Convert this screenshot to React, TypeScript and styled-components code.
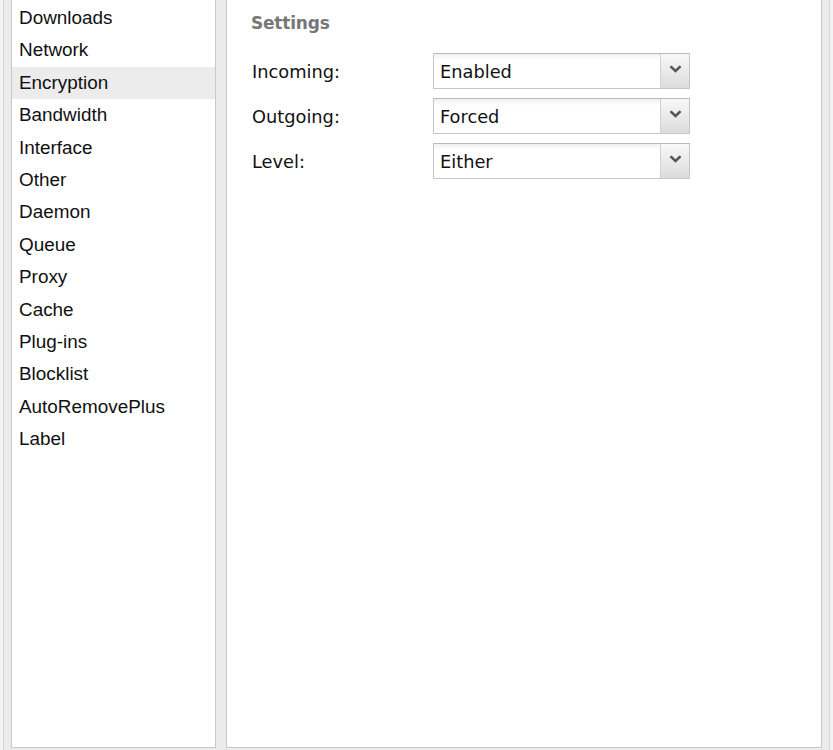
import React from "react";
import styled, { createGlobalStyle } from "styled-components";

const Global = createGlobalStyle`
  html, body { margin: 0; padding: 0; background: #ececec; }
  #root { width: 833px; height: 750px; }
`;

const Frame = styled.div`
  width: 833px;
  height: 750px;
  box-sizing: border-box;
  background: #f3f3f3;
  padding-left: 3px;
  padding-right: 3px;
  display: flex;
`;

const Inner = styled.div`
  flex: 1;
  display: flex;
  gap: 10px;
  background: #ebebeb;
  border-left: 1px solid #d6d6d6;
  border-right: 1px solid #d6d6d6;
  padding: 0 7px 2px 7px;
  box-sizing: border-box;
`;

const Panel = styled.div<{ $width?: number }>`
  background: #ffffff;
  border: 1px solid #c9c9c9;
  border-top: none;
  box-sizing: border-box;
  ${(p) => (p.$width ? `width: ${p.$width}px; flex: none;` : "flex: 1;")}
`;

const NavList = styled.ul`
  list-style: none;
  margin: 0;
  padding: 2px 0 0 0;
`;

const NavItem = styled.li<{ $active?: boolean }>`
  height: 32.4px;
  line-height: 32.4px;
  padding-left: 7px;
  font-family: "Liberation Sans", Arial, sans-serif;
  font-size: 18.9px;
  color: #111;
  background: ${(p) => (p.$active ? "#ececec" : "transparent")};
  white-space: nowrap;
`;

const Content = styled.div`
  padding: 11px 0 0 24px;
`;

const Heading = styled.div`
  font-family: "DejaVu Sans", Verdana, sans-serif;
  font-weight: bold;
  font-size: 17px;
  color: #777777;
  height: 24px;
  line-height: 24px;
  margin-bottom: 18px;
  letter-spacing: -0.2px;
`;

const Form = styled.div`
  display: grid;
  grid-template-columns: 182px 257px;
  row-gap: 9px;
  align-items: center;
`;

const Label = styled.div`
  font-family: "DejaVu Sans", Verdana, sans-serif;
  font-size: 17.8px;
  color: #111;
  padding-left: 1px;
`;

const SelectBox = styled.div`
  height: 36px;
  box-sizing: border-box;
  border: 1px solid #c6c6c6;
  border-top-color: #b9b9b9;
  display: flex;
  background: linear-gradient(#f0f0f0 0px, #ffffff 6px, #ffffff 100%);
`;

const SelectValue = styled.div`
  flex: 1;
  font-family: "DejaVu Sans", Verdana, sans-serif;
  font-size: 17.8px;
  color: #111;
  line-height: 36px;
  padding-left: 6px;
`;

const SelectButton = styled.div`
  width: 29px;
  border-left: 1px solid #d2d2d2;
  background: linear-gradient(#f8f8f8, #dcdcdc);
  display: flex;
  align-items: center;
  justify-content: center;
  padding-bottom: 3px;
  box-sizing: border-box;
`;

const Chevron = () => (
  <svg width="13" height="9" viewBox="0 0 13 9">
    <path d="M0.5 2 L2.5 0.5 L6.5 4.2 L10.5 0.5 L12.5 2 L6.5 7.8 Z" fill="#555555" />
  </svg>
);

const Select = ({ value }: { value: string }) => (
  <SelectBox>
    <SelectValue>{value}</SelectValue>
    <SelectButton>
      <Chevron />
    </SelectButton>
  </SelectBox>
);

const items = [
  "Downloads",
  "Network",
  "Encryption",
  "Bandwidth",
  "Interface",
  "Other",
  "Daemon",
  "Queue",
  "Proxy",
  "Cache",
  "Plug-ins",
  "Blocklist",
  "AutoRemovePlus",
  "Label",
];

const rows = [
  { label: "Incoming:", value: "Enabled" },
  { label: "Outgoing:", value: "Forced" },
  { label: "Level:", value: "Either" },
];

export default function App() {
  return (
    <>
      <Global />
      <Frame>
        <Inner>
          <Panel $width={205}>
            <NavList>
              {items.map((it) => (
                <NavItem key={it} $active={it === "Encryption"}>
                  {it}
                </NavItem>
              ))}
            </NavList>
          </Panel>
          <Panel>
            <Content>
              <Heading>Settings</Heading>
              <Form>
                {rows.map((r) => (
                  <React.Fragment key={r.label}>
                    <Label>{r.label}</Label>
                    <Select value={r.value} />
                  </React.Fragment>
                ))}
              </Form>
            </Content>
          </Panel>
        </Inner>
      </Frame>
    </>
  );
}
